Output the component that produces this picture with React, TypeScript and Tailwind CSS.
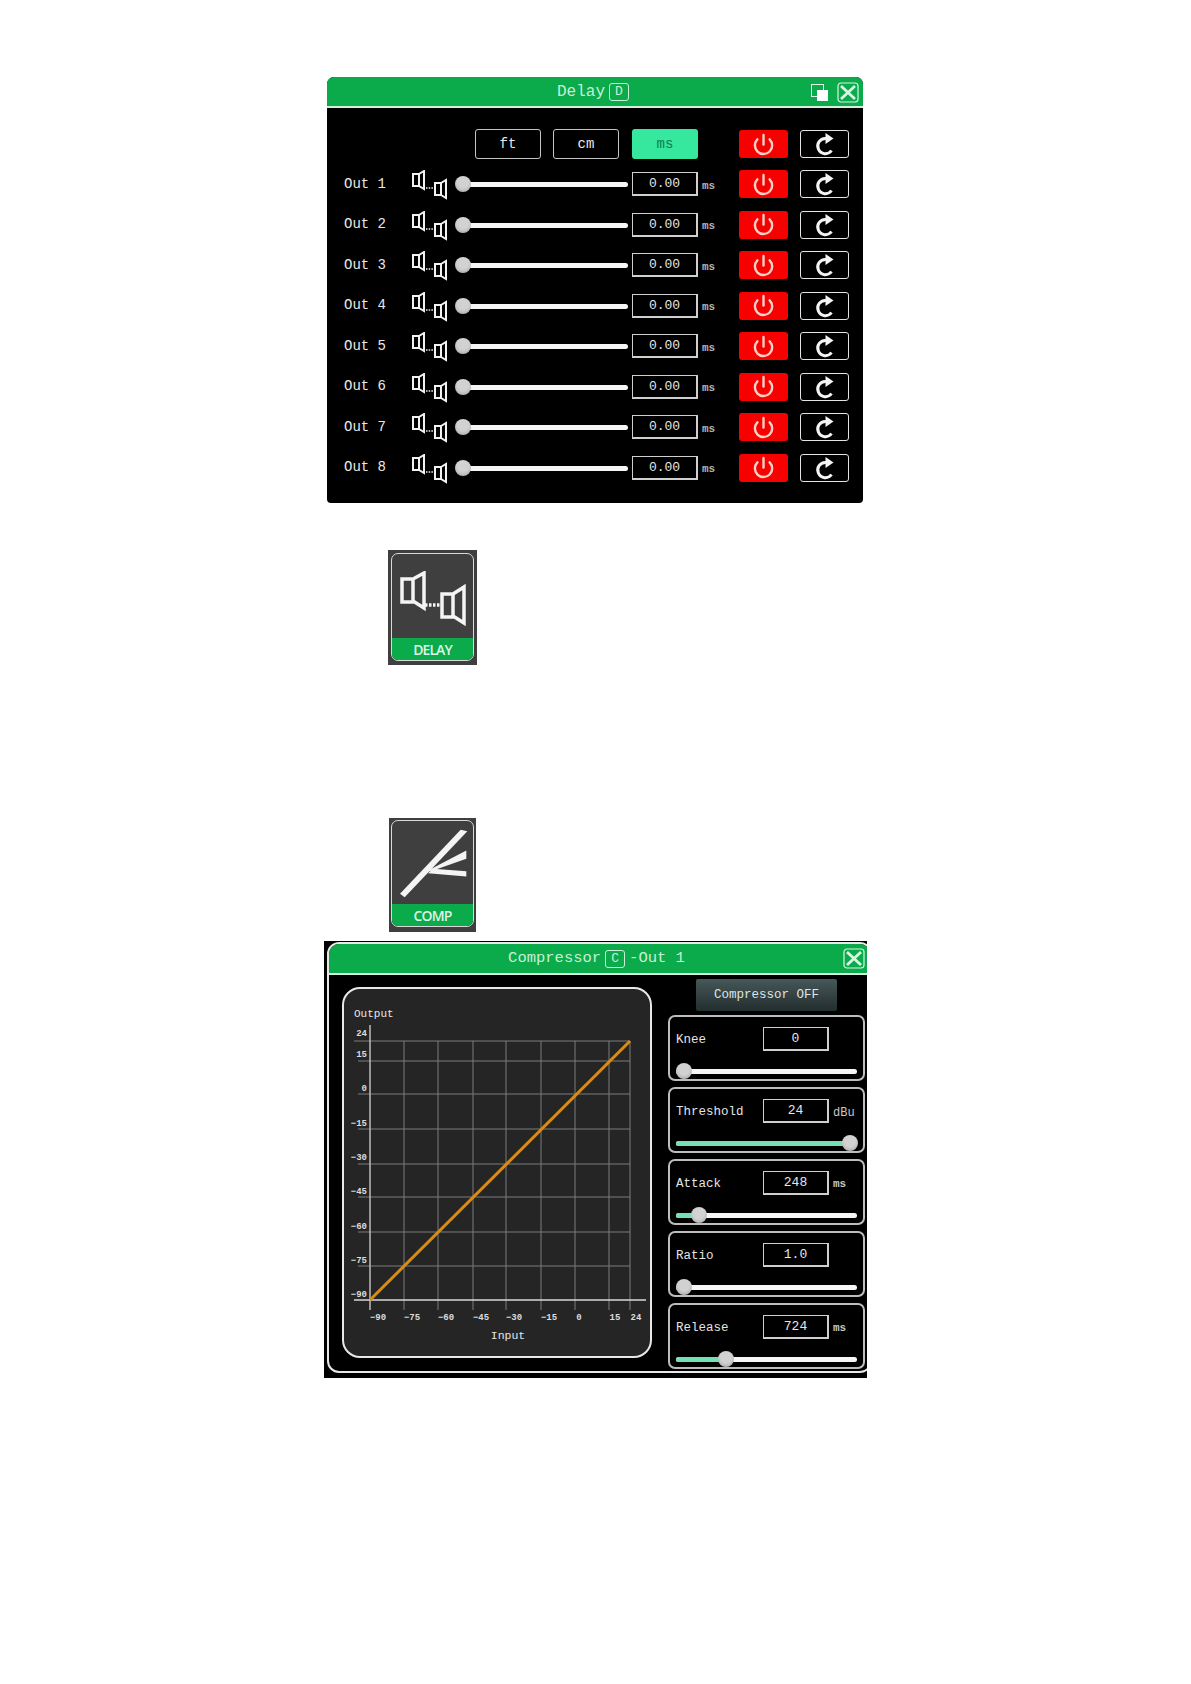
import { Power } from "lucide-react";

const mono = { fontFamily: '"Liberation Mono", "DejaVu Sans Mono", monospace' };
const outs = [1, 2, 3, 4, 5, 6, 7, 8];

const yTicks = [
  { label: "24", y: 100, ty: 47 },
  { label: "15", y: 120, ty: 68 },
  { label: "0", y: 153, ty: 102 },
  { label: "−15", y: 188, ty: 137 },
  { label: "−30", y: 223, ty: 171 },
  { label: "−45", y: 256, ty: 205 },
  { label: "−60", y: 291, ty: 240 },
  { label: "−75", y: 325, ty: 274 },
  { label: "−90", y: 359, ty: 308 },
];

const xTicks = [
  { label: "−90", x: 26, tx: 34 },
  { label: "−75", x: 60, tx: 68 },
  { label: "−60", x: 94, tx: 102 },
  { label: "−45", x: 129, tx: 137 },
  { label: "−30", x: 162, tx: 170 },
  { label: "−15", x: 197, tx: 205 },
  { label: "0", x: 231, tx: 235 },
  { label: "15", x: 265, tx: 271 },
  { label: "24", x: 286, tx: 292 },
];

const compRows = [
  { name: "Knee", value: "0", unit: "", thumb: 8 },
  { name: "Threshold", value: "24", unit: "dBu", thumb: 174 },
  { name: "Attack", value: "248", unit: "ms", thumb: 23 },
  { name: "Ratio", value: "1.0", unit: "", thumb: 8 },
  { name: "Release", value: "724", unit: "ms", thumb: 50 },
];

function Speakers() {
  return (
    <svg width="36" height="30" viewBox="0 0 36 30" fill="none" stroke="#f2f2f2" strokeWidth="2" className="translate-x-[1px] translate-y-[1px]">
      <path d="M1 4h6v12H1zM7 4l5-3v18l-5-3" />
      <path d="M14 18h8" strokeDasharray="1.5 1.2" strokeWidth="1.5" />
      <path d="M23 13h6v12h-6zM29 13l5-3v18l-5-3" />
    </svg>
  );
}

function ResetIcon() {
  return (
    <svg width="24" height="24" viewBox="0 0 24 24" fill="none">
      <path d="M13 6.5A7.6 7.6 0 1 0 18.5 18.5" stroke="#f4f4f4" strokeWidth="3" />
      <path d="M12.5 1L20.5 6.5L12.5 12Z" fill="#f4f4f4" />
    </svg>
  );
}

function Slider({ thumb, bare }: { thumb: number; bare?: boolean }) {
  return (
    <div className="relative h-4 w-full">
      <div
        className="absolute right-0 top-[6px] h-[5px] rounded-full bg-[#f6f6f6]"
        style={{ left: bare ? thumb : 0 }}
      />
      {!bare && <div className="absolute left-0 top-[6px] h-[5px] rounded-full bg-[#74e0b4]" style={{ width: thumb }} />}
      <div
        className="absolute top-0 h-4 w-4 rounded-full bg-[#d2d2d2] shadow-[inset_0_-2px_3px_rgba(0,0,0,0.15)]"
        style={{ left: thumb - 8 }}
      />
    </div>
  );
}

function ValueBox({ value }: { value: string }) {
  return (
    <div className="flex h-6 w-[66px] items-center justify-center border border-r-2 border-b-2 border-[#cfcfcf] text-[13px] text-[#e6e6e6]">
      {value}
    </div>
  );
}

function KeyBadge({ letter }: { letter: string }) {
  return (
    <span className="mx-[4px] inline-flex h-[18px] w-[20px] items-center justify-center rounded-[3px] border border-[#c8f0d8] text-[13px]">
      {letter}
    </span>
  );
}

function CloseIcon() {
  return (
    <svg width="22" height="21" viewBox="0 0 22 21" fill="none" stroke="#d8f5e4">
      <rect x="1" y="1" width="20" height="19" rx="3" strokeWidth="1.2" />
      <path d="M4 4l14 13M18 4L4 17" strokeWidth="2.8" />
    </svg>
  );
}

function PowerBtn() {
  return (
    <div className="flex h-7 w-[49px] items-center justify-center rounded-[3px] bg-[#f70000]">
      <Power size={23} strokeWidth={2.5} color="#ffd0c8" />
    </div>
  );
}

function ResetBtn() {
  return (
    <div className="ml-3 flex h-7 w-[49px] items-center justify-center rounded-[3px] border border-[#e4e4e4]">
      <ResetIcon />
    </div>
  );
}

function DelayWindow() {
  return (
    <div className="ml-[327px] mt-[77px] h-[426px] w-[536px] overflow-hidden rounded-t-[7px] rounded-b-[4px] bg-black" style={mono}>
      <div className="relative flex h-[31px] items-center justify-center border-b-2 border-[#d4f0dc] bg-[#0bab4b] pt-px text-[16px] text-[#c8f0d8]">
        <span>Delay</span>
        <KeyBadge letter="D" />
        <div className="absolute right-[35px] top-[7px] h-[17px] w-[17px]">
          <div className="h-[13px] w-[13px] border border-[#e4f7ea]" />
          <div className="absolute bottom-0 right-0 h-[11px] w-[11px] bg-white" />
        </div>
        <div className="absolute right-[4px] top-[5px]">
          <CloseIcon />
        </div>
      </div>

      <div className="pt-[16px]">
        <div className="flex h-10 items-center pl-[148px] text-[14px]">
          <div className="flex h-[30px] w-[66px] items-center justify-center rounded-[3px] border border-[#c4c4c4] text-[#e8e8e8]">ft</div>
          <div className="ml-3 flex h-[30px] w-[66px] items-center justify-center rounded-[3px] border border-[#c4c4c4] text-[#e8e8e8]">cm</div>
          <div className="ml-[13px] mr-[41px] flex h-[30px] w-[66px] items-center justify-center rounded-[3px] bg-[#35e89d] text-[#0d7a55]">ms</div>
          <PowerBtn />
          <ResetBtn />
        </div>

        {outs.map((n) => (
          <div key={n} className="flex h-[40.5px] items-center pl-[17px]">
            <div className="w-[67px] text-[14px] text-[#e8e8e8]">Out {n}</div>
            <div className="w-[41px]">
              <Speakers />
            </div>
            <div className="w-[176px]">
              <Slider thumb={11} bare />
            </div>
            <div className="ml-1">
              <ValueBox value="0.00" />
            </div>
            <div className="w-[41px] pl-1 pt-[3px] text-[11px] font-bold text-[#b4b4b4]">ms</div>
            <PowerBtn />
            <ResetBtn />
          </div>
        ))}
      </div>
    </div>
  );
}

function Tile({ label, children, className }: { label: string; children: React.ReactNode; className: string }) {
  return (
    <div className={`flex flex-col bg-[#3f3f3f] ${className}`}>
      <div className="flex flex-1 flex-col overflow-hidden rounded-[7px] border border-[#d9d9d9]">
        <div className="flex flex-1 items-center justify-center">{children}</div>
        <div
          className="flex h-[22px] items-center justify-center bg-[#0bab4b] text-[14px] font-semibold tracking-[-0.9px] text-[#dff5e6]"
          style={{ fontFamily: '"Open Sans", sans-serif' }}
        >
          {label}
        </div>
      </div>
    </div>
  );
}

function Chart() {
  return (
    <svg width="306" height="366" viewBox="0 0 306 366" className="block">
      {yTicks.slice(0, 8).map((t) => (
        <line key={t.y} x1={t.y < 110 ? 10 : 14} x2="286" y1={t.y - 48} y2={t.y - 48} stroke="#7d7d7d" />
      ))}
      {xTicks.slice(1).map((t) => (
        <line key={t.x} x1={t.x} x2={t.x} y1="52" y2="321" stroke="#7d7d7d" />
      ))}
      <line x1="26" x2="26" y1="36" y2="321" stroke="#bdbdbd" strokeWidth="1.5" />
      <line x1="10" x2="302" y1="311" y2="311" stroke="#d8d8d8" strokeWidth="1.5" />
      <line x1="26" y1="311" x2="286" y2="52" stroke="#d98c12" strokeWidth="3" />
      <g fill="#dcdcdc" fontSize="9" fontWeight="700" fontFamily='"Liberation Mono", monospace'>
        {yTicks.map((t) => (
          <text key={t.label} x="23" y={t.ty} textAnchor="end">
            {t.label}
          </text>
        ))}
        {xTicks.map((t) => (
          <text key={t.label} x={t.tx} y="331" textAnchor="middle">
            {t.label}
          </text>
        ))}
      </g>
      <text x="10" y="28" fill="#e6e6e6" fontSize="11" fontFamily='"Liberation Mono", monospace'>Output</text>
      <text x="164" y="350" fill="#e6e6e6" fontSize="11.5" textAnchor="middle" fontFamily='"Liberation Mono", monospace'>Input</text>
    </svg>
  );
}

function CompressorWindow() {
  return (
    <div className="ml-[324px] mt-[9px] h-[437px] w-[543px] overflow-hidden bg-black pl-[3px] pt-px" style={mono}>
      <div className="h-[431px] w-[545px] rounded-[12px] border-2 border-[#e8e8e8]">
        <div className="relative flex h-[31px] items-center justify-center rounded-t-[10px] border-b-2 border-[#d4f0dc] bg-[#0bab4b] pr-[6px] pt-px text-[15.5px] text-[#c8f0d8]">
          <span>Compressor</span>
          <KeyBadge letter="C" />
          <span>-Out 1</span>
          <div className="absolute right-[5px] top-[4px]">
            <CloseIcon />
          </div>
        </div>

        <div className="flex pl-[13px] pt-[12px]">
          <div className="h-[371px] w-[310px] overflow-hidden rounded-[18px] border-2 border-[#e8e8e8] bg-[#252525]">
            <Chart />
          </div>

          <div className="ml-[16px] -mt-[8px] w-[197px]">
            <div className="mx-auto flex h-[32px] w-[141px] items-center justify-center rounded-[2px] bg-gradient-to-b from-[#47585a] to-[#232e2e] text-[12.5px] text-[#dfe5e5]">
              Compressor OFF
            </div>
            <div className="mt-[4px] flex flex-col gap-[6px]">
              {compRows.map((r) => (
                <div key={r.name} className="h-[66px] rounded-[7px] border-2 border-[#bdbdbd] px-[6px] pt-[10px]">
                  <div className="flex h-6 items-center">
                    <div className="w-[87px] pt-[3px] text-[12.5px] text-[#e4e4e4]">{r.name}</div>
                    <ValueBox value={r.value} />
                    <div className={`ml-1 pt-[3px] text-[#c8c8c8] ${r.unit === "ms" ? "text-[11px] font-bold" : "text-[12px]"}`}>{r.unit}</div>
                  </div>
                  <div className="mt-[12px]">
                    <Slider thumb={r.thumb} />
                  </div>
                </div>
              ))}
            </div>
          </div>
        </div>
      </div>
    </div>
  );
}

export default function App() {
  return (
    <div className="flex h-[1684px] w-[1191px] flex-col overflow-hidden bg-white">
      <DelayWindow />

      <Tile label="DELAY" className="ml-[388px] mt-[47px] h-[115px] w-[89px] px-[3px] pb-[4px] pt-[3px]">
        <svg width="66" height="56" viewBox="0 0 66 56" fill="none" stroke="#f4f4f4" strokeWidth="3.5" className="translate-y-[3px]">
          <path d="M2 8h11v23H2zM13 8l11-6v35l-11-7" />
          <path d="M25 34h16" strokeDasharray="2.5 1.5" />
          <path d="M42 23h11v23H42zM53 23l11-7v36l-11-7" />
        </svg>
      </Tile>

      <Tile label="COMP" className="ml-[389px] mt-[153px] h-[114px] w-[87px] px-[2px] pb-[5px] pt-[2px]">
        <svg width="70" height="72" viewBox="80 50 210 215" fill="#f4f4f4">
          <polygon points="86,250 100,260 288,62 268,58" />
          <polygon points="160,185 285,120 285,145 185,180" />
          <polygon points="185,175 285,182 285,198 170,188" />
        </svg>
      </Tile>

      <CompressorWindow />
    </div>
  );
}
